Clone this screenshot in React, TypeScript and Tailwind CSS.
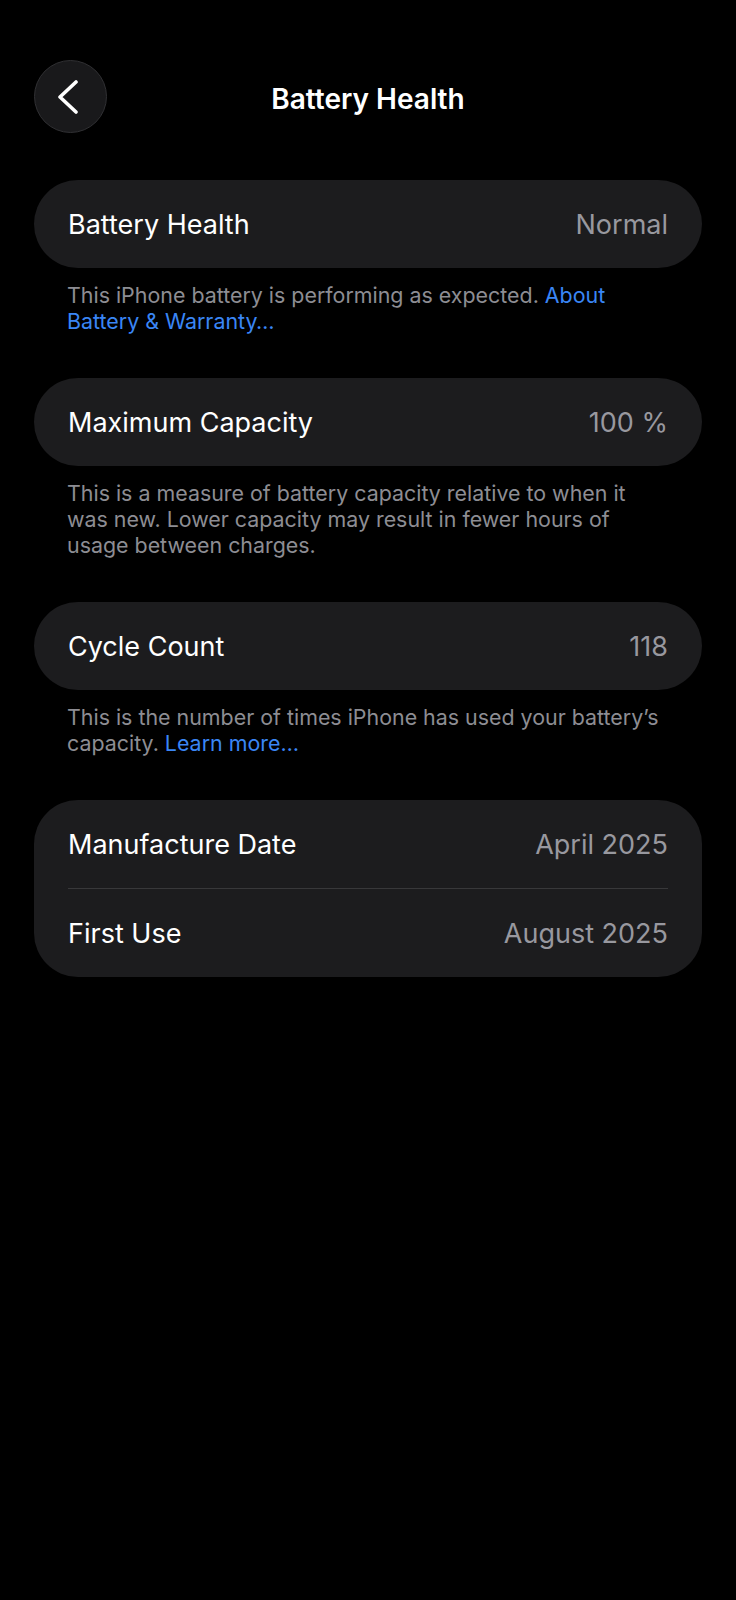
import type { ReactNode } from 'react';

type Row = {
  label: string;
  value: string;
};

function Card({ children }: { children: ReactNode }) {
  return <div className="mx-[34px] rounded-[44px] bg-[#1c1c1e] px-[34px]">{children}</div>;
}

function InfoRow({ label, value }: Row) {
  return (
    <div className="flex h-[88px] items-center justify-between pt-[3px]">
      <span className="text-[27px] text-white">{label}</span>
      <span className="text-[27px] text-[#98989f]">{value}</span>
    </div>
  );
}

function Footer({ children }: { children: ReactNode }) {
  return (
    <p className="mx-[34px] mt-[14px] mb-[44px] px-[33px] text-[21.4px] leading-[26px] text-[#8d8d93]">
      {children}
    </p>
  );
}

export default function App() {
  return (
    <div
      className="min-h-[1600px] w-full bg-black pt-[60px]"
      style={{ fontFamily: 'Inter, "Noto Sans", sans-serif' }}
    >
      {/* Nav bar */}
      <div className="relative flex h-[73px] items-center justify-center">
        <button className="absolute left-[34px] top-0 flex h-[73px] w-[73px] items-center justify-center rounded-full border border-[#303033] bg-[#19191b] pr-[5px]">
          <svg width="20" height="34" viewBox="0 0 20 34" fill="none">
            <path
              d="M18 2 L2 17 L18 32"
              stroke="white"
              strokeWidth="3.6"
              strokeLinecap="round"
              strokeLinejoin="round"
            />
          </svg>
        </button>
        <h1 className="mt-[4px] text-[28px] font-semibold text-white">Battery Health</h1>
      </div>

      <div className="mt-[47px]">
        <Card>
          <InfoRow label="Battery Health" value="Normal" />
        </Card>
        <Footer>
          This iPhone battery is performing as expected.{' '}
          <span className="text-[#3a86f5]">About</span>
          <br />
          <span className="text-[#3a86f5]">Battery &amp; Warranty…</span>
        </Footer>

        <Card>
          <InfoRow label="Maximum Capacity" value="100 %" />
        </Card>
        <Footer>
          This is a measure of battery capacity relative to when it
          <br />
          was new. Lower capacity may result in fewer hours of
          <br />
          usage between charges.
        </Footer>

        <Card>
          <InfoRow label="Cycle Count" value="118" />
        </Card>
        <Footer>
          This is the number of times iPhone has used your battery’s
          <br />
          capacity. <span className="text-[#3a86f5]">Learn more…</span>
        </Footer>

        <Card>
          <InfoRow label="Manufacture Date" value="April 2025" />
          <div className="h-px bg-[#38383a]" />
          <InfoRow label="First Use" value="August 2025" />
        </Card>
      </div>
    </div>
  );
}
